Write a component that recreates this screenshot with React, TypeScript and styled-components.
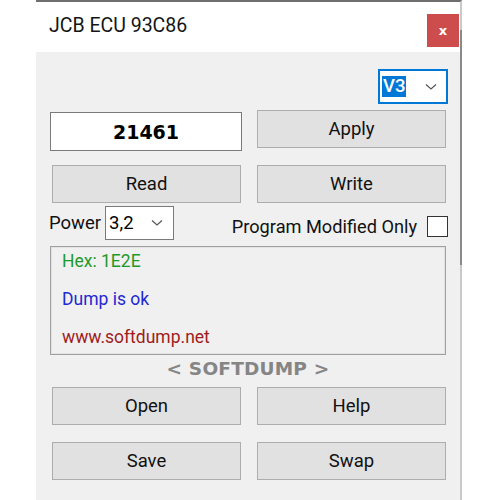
import React from "react";
import styled, { createGlobalStyle } from "styled-components";

const Global = createGlobalStyle`
  html, body { margin: 0; padding: 0; background: #ffffff; }
  body { font-family: Roboto, "Noto Sans", sans-serif; }
`;

const Window = styled.div`
  margin-left: 36px;
  width: 424px;
  height: 498px;
  border-top: 2px solid #6f6f6f;
  border-right: 2px solid #c9c9c9;
  position: relative;
  display: flex;
  flex-direction: column;
  background: #f0f0f0;
`;

const ScrollThumb = styled.div`
  position: absolute;
  right: -2px;
  top: 28px;
  width: 2px;
  height: 235px;
  background: #8a8a8a;
`;

const TitleBar = styled.div`
  height: 50px;
  background: #ffffff;
  display: flex;
  align-items: flex-start;
  justify-content: space-between;
  padding-left: 13px;
`;

const Title = styled.div`
  font-size: 19.5px;
  color: #151515;
  margin-top: 12px;
`;

const CloseBtn = styled.div`
  width: 32px;
  height: 33px;
  margin-top: 12px;
  margin-right: 1px;
  background: #cd4d4d;
  color: #fff;
  font-family: "DejaVu Sans", sans-serif;
  font-weight: bold;
  font-size: 13px;
  display: flex;
  align-items: center;
  justify-content: center;
`;

const Body = styled.div`
  flex: 1;
  padding: 17px 14px 0 14px;
  display: flex;
  flex-direction: column;
`;

const ComboRow = styled.div`
  display: flex;
  justify-content: flex-end;
  margin-right: -2px;
`;

const Combo = styled.div<{ $w: number; $focus?: boolean }>`
  width: ${(p) => p.$w}px;
  height: ${(p) => (p.$focus ? 35 : 34)}px;
  box-sizing: border-box;
  background: #ffffff;
  border: 1px solid ${(p) => (p.$focus ? "#0078d7" : "#7a7a7a")};
  ${(p) => (p.$focus ? "box-shadow: inset 0 0 0 1px #0078d7;" : "")}
  display: flex;
  align-items: center;
  justify-content: space-between;
  padding: 0 10px 0 3px;
  font-size: 18.5px;
  color: #000;
`;

const Selected = styled.span`
  background: #0078d7;
  color: #fff;
  padding: 0 1px;
  line-height: 21px;
  font-weight: 500;
`;

const Chevron = () => (
  <svg width="12" height="8" viewBox="0 0 12 8">
    <path d="M1 1.5 L6 6 L11 1.5" fill="none" stroke="#555" strokeWidth="1.2" />
  </svg>
);

const TopRow = styled.div`
  display: grid;
  grid-template-columns: 192px 189px;
  column-gap: 15px;
  margin-top: 6px;
  align-items: start;
`;

const NumberBox = styled.div`
  height: 39px;
  margin-top: 2px;
  box-sizing: border-box;
  background: #ffffff;
  border: 1px solid #7a7a7a;
  display: flex;
  align-items: center;
  justify-content: center;
  font-family: "DejaVu Sans", sans-serif;
  font-weight: bold;
  font-size: 19px;
  color: #000;
`;

const Button = styled.div`
  height: 38px;
  box-sizing: border-box;
  background: #e1e1e1;
  border: 1px solid #adadad;
  display: flex;
  align-items: center;
  justify-content: center;
  font-size: 18.5px;
  color: #111;
`;

const ButtonRow = styled.div<{ $mt: number }>`
  display: grid;
  grid-template-columns: 189px 189px;
  column-gap: 16px;
  padding-left: 2px;
  margin-top: ${(p) => p.$mt}px;
`;

const OptionRow = styled.div`
  display: flex;
  align-items: center;
  margin-top: 3px;
  margin-left: -1px;
  margin-right: -2px;
  height: 34px;
`;

const Label = styled.span`
  font-size: 18.5px;
  color: #111;
  margin-right: 4px;
`;

const CheckLabel = styled.span`
  margin-left: auto;
  font-size: 18.2px;
  color: #111;
  margin-top: 7px;
`;

const CheckBox = styled.div`
  width: 21px;
  height: 21px;
  box-sizing: border-box;
  border: 1px solid #333;
  background: #fff;
  margin-left: 10px;
  margin-top: 7px;
`;

const Panel = styled.div`
  margin-top: 6px;
  height: 109px;
  box-sizing: border-box;
  border: 1px solid #a0a0a0;
  box-shadow: inset 0 0 0 1px #e3e3e3;
  padding: 0 0 0 11px;
  display: flex;
  flex-direction: column;
  overflow: hidden;
`;

const Line = styled.div<{ $c: string }>`
  flex-shrink: 0;
  color: ${(p) => p.$c};
  font-size: 17.5px;
  height: 38px;
  line-height: 28px;
`;

const Brand = styled.div`
  text-align: center;
  font-family: "DejaVu Sans", sans-serif;
  font-weight: bold;
  font-size: 18.5px;
  letter-spacing: 0.2px;
  color: #858585;
  margin-top: 2px;
  height: 25px;
  line-height: 24px;
`;

export default function App() {
  return (
    <>
      <Global />
      <Window>
        <ScrollThumb />
        <TitleBar>
          <Title>JCB ECU 93C86</Title>
          <CloseBtn>x</CloseBtn>
        </TitleBar>
        <Body>
          <ComboRow>
            <Combo $w={70} $focus>
              <Selected>V3</Selected>
              <Chevron />
            </Combo>
          </ComboRow>
          <TopRow>
            <NumberBox>21461</NumberBox>
            <Button>Apply</Button>
          </TopRow>
          <ButtonRow $mt={14}>
            <Button>Read</Button>
            <Button>Write</Button>
          </ButtonRow>
          <OptionRow>
            <Label>Power</Label>
            <Combo $w={69}>
              <span>3,2</span>
              <Chevron />
            </Combo>
            <CheckLabel>Program Modified Only</CheckLabel>
            <CheckBox />
          </OptionRow>
          <Panel>
            <Line $c="#1f9a2a">Hex: 1E2E</Line>
            <Line $c="#1e28d2">Dump is ok</Line>
            <Line $c="#a01c1c">www.softdump.net</Line>
          </Panel>
          <Brand>&lt; SOFTDUMP &gt;</Brand>
          <ButtonRow $mt={5}>
            <Button>Open</Button>
            <Button>Help</Button>
          </ButtonRow>
          <ButtonRow $mt={17}>
            <Button>Save</Button>
            <Button>Swap</Button>
          </ButtonRow>
        </Body>
      </Window>
    </>
  );
}
